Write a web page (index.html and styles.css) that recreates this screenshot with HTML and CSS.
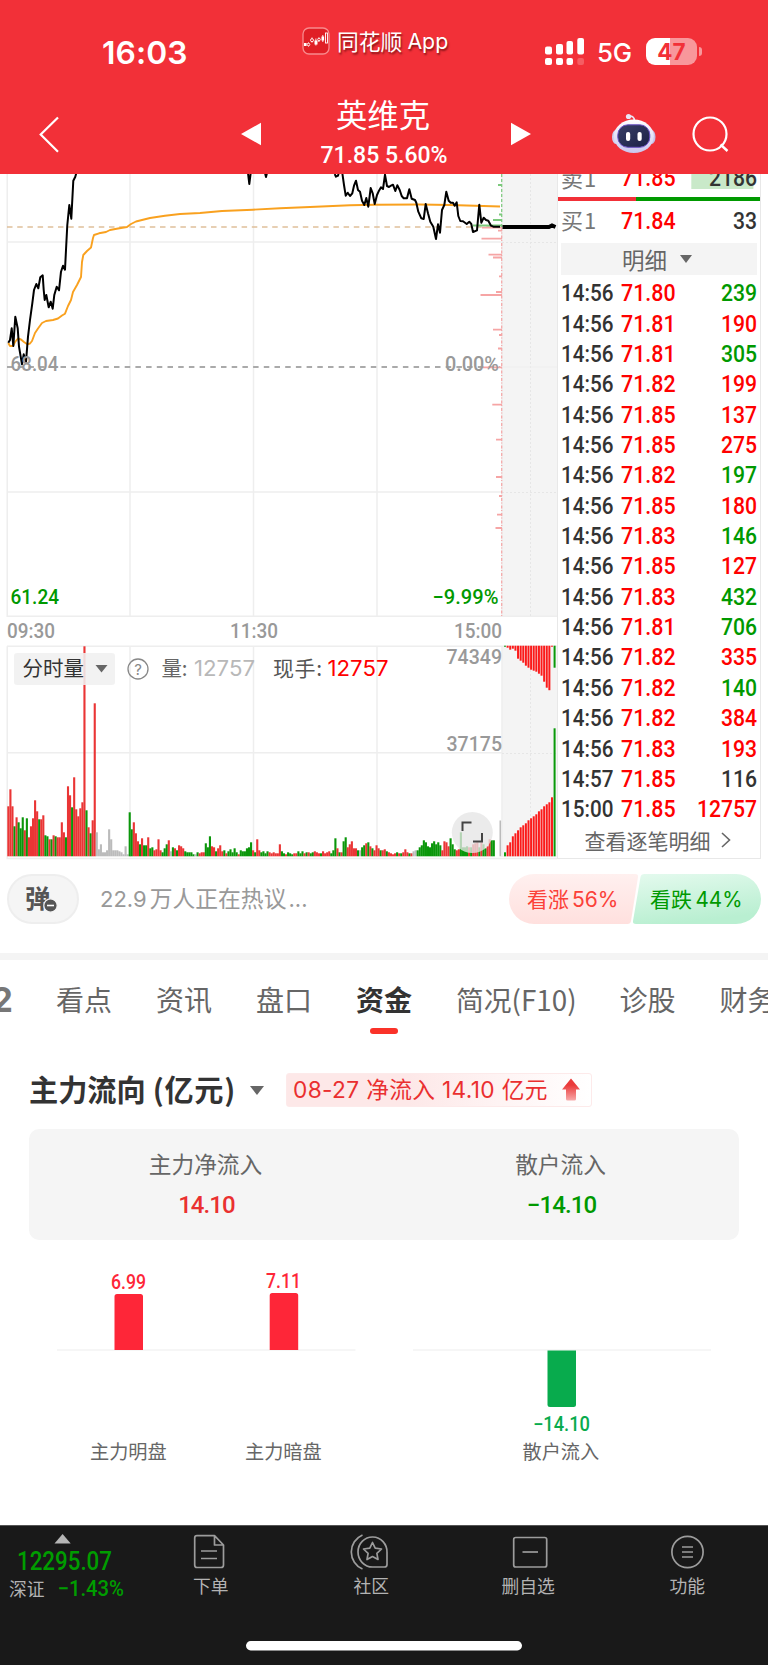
FILE: index.html
```html
<!DOCTYPE html>
<html lang="zh-CN">
<head>
<meta charset="utf-8">
<title>英维克 71.85</title>
<link rel="stylesheet" href="styles.css">
</head>
<body>
<div class="app">
  <header class="top">
    <div class="status">
      <div class="clock">16:03</div>
      <div class="brand">
        <svg class="brand-icon" viewBox="0 0 28 28"><rect x="1" y="1" width="26" height="26" rx="6" fill="#e01f26" stroke="#f88a8d" stroke-width="1.3"/><g fill="#fff"><rect x="2" y="16" width="2.6" height="3"/><rect x="12.5" y="13.5" width="3" height="4"/><rect x="19.5" y="9.500" width="2.600" height="4"/></g><g fill="none" stroke="#fff" stroke-width=".9"><path d="M6.500 15.500v4M10 10.500v5M16.900 10.500v4.500M13.900 11.500v7M20.800 8v7"/><circle cx="6.500" cy="17.500" r="1.300" fill="#e01f26"/><circle cx="10" cy="13.200" r="1.500" fill="#e01f26"/><circle cx="17" cy="12.500" r="1.300" fill="#e01f26"/><rect x="23.500" y="6" width="2" height="10"/></g></svg>
        <span class="brand-cn">同花顺</span><span class="brand-en">App</span>
      </div>
      <div class="signals">
        <svg width="40" height="28" viewBox="0 0 40 28" fill="#fff"><rect x="0" y="8.500" width="7" height="8" rx="2"/><rect x="11" y="6" width="7" height="10.500" rx="2"/><rect x="21.500" y="3" width="6.500" height="13.500" rx="2"/><rect x="32.300" y="0" width="6.700" height="16.500" rx="2"/><rect x="0" y="20" width="7" height="7" rx="2"/><rect x="11" y="20" width="7" height="7" rx="2"/><rect x="21.500" y="20" width="6.500" height="7" rx="2"/><rect x="32.300" y="20" width="6.700" height="7" rx="2" opacity=".22"/></svg>
        <span class="net">5G</span>
        <span class="battery">47</span><i class="nub"></i>
      </div>
    </div>
    <nav class="nav">
      <svg viewBox="0 90 768 84" width="768" height="84">
        <path d="M58 117.500L40.700 134.500L58 151.700" fill="none" stroke="#fff" stroke-width="2.200"/>
        <path d="M241 134L261 122.700V145.300ZM531 134L511 122.700V145.300Z" fill="#fff"/>
        <text class="cjk" x="336" y="127" font-size="31.300" textLength="94" fill="#fff">英维克</text>
        <text class="num" x="320.500" y="163" font-size="24.500" textLength="127" lengthAdjust="spacingAndGlyphs" fill="#fff">71.85 5.60%</text>
        <defs>
          <linearGradient id="head" x1="0" y1="0" x2="0" y2="1"><stop offset="0" stop-color="#fff"/><stop offset="1" stop-color="#c9c6ee"/></linearGradient>
          <linearGradient id="visor" x1="0" y1="0" x2="1" y2="1"><stop offset="0" stop-color="#3a3f66"/><stop offset="1" stop-color="#1a2046"/></linearGradient>
        </defs>
        <path d="M628 116.500C632 115.500 634.500 117 634.500 121" fill="none" stroke="#e9e7f6" stroke-width="1.800"/>
        <circle cx="628.500" cy="116.500" r="2.600" fill="#e9e7f6"/>
        <ellipse cx="616" cy="137" rx="4" ry="7" fill="#cfd0f0"/><ellipse cx="651.500" cy="137" rx="4" ry="7" fill="#c5c2ea"/>
        <ellipse cx="633.800" cy="136.300" rx="20" ry="16.800" fill="url(#head)"/>
        <rect x="617.800" y="124.800" width="32" height="22.500" rx="10" fill="url(#visor)" stroke="#6a4fc4" stroke-width="1"/>
        <rect x="626" y="132" width="4.200" height="9" rx="2" fill="#fff"/><rect x="637.500" y="132" width="4.200" height="9" rx="2" fill="#fff"/>
        <circle cx="710" cy="134" r="16.500" fill="none" stroke="#fff" stroke-width="2.200"/>
        <path d="M720.500 144.500L727.500 151" stroke="#fff" stroke-width="2.400"/>
      </svg>
    </nav>
  </header>

  <section class="market">
    <svg class="chart" viewBox="0 174 557 688" width="557" height="688">
      <rect x="502" y="174" width="55" height="442" fill="#f4f4f4"/>
      <rect x="502" y="646" width="55" height="211" fill="#f4f4f4"/>
      <g stroke="#eee" stroke-width="1.500" fill="none">
        <path d="M7.200 174V616.200H557M7.200 646.200V858.500H557M7 646.200H557M130 174V616M253.500 174V616M377 174V616M502 174V616M7 242H502M7 492H502"/>
        <path d="M130 646V857M253.500 646V857M377 646V857M502 646V857M7 752.700H502"/>
        <path stroke="#e6e6e6" stroke-width="1" stroke-dasharray="2 2" d="M530.500 174V616M530.500 646V857M502 242.500H557M502 492.500H557M502 753.500H557"/>
        <path d="M502 367H557" stroke-width="1"/>
      </g>
      <path d="M7 227H500" stroke="#dfc09a" stroke-width="1.300" stroke-dasharray="5.500 4.700"/>
      <path d="M7 367H500" stroke="#aaa" stroke-width="1.800" stroke-dasharray="5.500 5.200"/>
      <g fill="none" stroke="#f6a5a5" stroke-width="1.800">
        <path d="M482 227.700H502M498 230.700H502M481.500 238.700H502M488.500 254.700H502M493 257.500H502M499 276.300H502M496 292H502M480.500 295H502M493 329.700H502M499 335H502M498 348.500H502M483 367.300H502M492.300 404.700H502M496 439.700H502M496 477H502M499 496H502M497 514.700H502M495.500 528H502"/>
        <path d="M501.700 228V616" stroke-width="1.200" stroke-dasharray="3 1.500 1 2"/>
        <path stroke="#7cc97c" d="M498 185H502M493 220H502M473 225.500H502M499 214.500H502"/>
        <path stroke="#7cc97c" d="M501.700 174V227" stroke-width="1.200" stroke-dasharray="3 2"/>
      </g>
      <path fill="none" stroke="#f9a11f" stroke-width="1.900" stroke-linejoin="round" d="M8.300 343L10 346L13 346L15 342L18 338.500L21 339.500L24 342L27.300 344.300L30 343.500L32 341L35 333L38 328.500L42 323L46 321L53 320L58 318.500L62 315.500L65 313.700L68 306L71 300L73 292L77 285L81 277L82 262L83.300 255L87 251L91 247.500L93 238L94 235L99 233.300L106 232L110 230L118 228.500L127 227L131 224L136 221.500L150 218L165 215.700L180 214L200 213L222 211L253 209.700L280 208.300L310 207L350 205.300L375 204.700L420 204.500L450 205L500 206.500"/>
      <path fill="none" stroke="#000" stroke-width="2" stroke-linejoin="round" d="M8.300 342.700L10 340L11.700 328.300L13.300 346L15.300 316.700L17.700 328.300L19 346.700L20.700 356.700L22 364.300L23.700 354.300L26 361.700L28 336.700L30 320L32.300 303.300L34 290L36.300 284L38.300 288.300L40.300 277.300L42.700 275.300L43.700 290L44.700 300L46.300 295L48.700 307.300L50.700 301.700L52.700 308.700L54.300 295L56.700 286.700L59 290.300L61 271.700L63 265.700L65 269.700L66 250L67.300 225L69.300 205L71.300 218.700L73.300 180.700L75.300 176.700L76.300 173M248 173L249.300 184L250.700 173M265 173L266 177L267 173M334.700 174L336 176.700L338 175.700L338.700 173M342.300 173L344 185L345.700 195.700L347.700 192.700L350 196L352.300 193.300L354 185.700L356 180.700L358 190L360 191.700L362 200.700L364.300 205L366.300 198L368.300 206.700L370.700 188L372.700 193.300L374.700 204L377 195L379 190.700L381 187.300L383 189L385 174.700L387 186L389 187L391 185.700L393 184.700L395.300 191L397.300 185.300L399.700 190L401.700 196L403.700 198.300L407 198.300L409.300 189.300L411.700 198.700L415 200L416.300 202.700L418.300 211.700L421.300 218.300L423.700 219L425.700 204L428 213.300L430.300 221.700L433.300 226.700L436 239L438 224.300L440 232.700L442 210L444.300 205L446.300 191.700L448.700 200.700L450.700 202.700L453 202.700L454.700 205.700L456.700 202.300L458.300 216L460.300 221L463 221.300L466.700 224L469.300 221.700L471.300 224L473 232L477 230.300L479.300 204.700L481.300 222.700L483.700 217.700L486 220L488.300 220.700L491 225.700L493.300 226.700L500 226.700"/>
      <path d="M502.500 227H549L552 225.500L555.500 227" fill="none" stroke="#000" stroke-width="4"/>
      <g class="num" font-size="20.500" fill="#999">
        <text x="10.500" y="370.500" textLength="48" lengthAdjust="spacingAndGlyphs">68.04</text>
        <text x="445" y="370.500" textLength="54" lengthAdjust="spacingAndGlyphs">0.00%</text>
        <text x="10.500" y="604" textLength="48.500" lengthAdjust="spacingAndGlyphs" fill="#090">61.24</text>
        <text x="432.500" y="604" textLength="66" lengthAdjust="spacingAndGlyphs" fill="#090">−9.99%</text>
        <text x="7" y="637.700" textLength="48" lengthAdjust="spacingAndGlyphs">09:30</text>
        <text x="230" y="637.700" textLength="48" lengthAdjust="spacingAndGlyphs">11:30</text>
        <text x="454" y="637.700" textLength="48" lengthAdjust="spacingAndGlyphs">15:00</text>
        <text x="446.500" y="663.700" textLength="55.500" lengthAdjust="spacingAndGlyphs">74349</text>
        <text x="446.500" y="751" textLength="55.500" lengthAdjust="spacingAndGlyphs">37175</text>
      </g>
      <g id="volume"></g>
      <rect x="14" y="653" width="101" height="32" rx="3" fill="#f0f0f0" opacity=".88"/>
      <text class="cjk" x="22.500" y="676" font-size="20.500" textLength="61.500" fill="#333">分时量</text>
      <path d="M95.500 665H107.500L101.500 672.500Z" fill="#666"/>
      <circle cx="138" cy="669" r="10" fill="none" stroke="#888" stroke-width="1.300"/>
      <text class="ui" x="138" y="674.500" font-size="15" text-anchor="middle" fill="#888">?</text>
      <text class="cjk" x="161.500" y="676" font-size="20.500" textLength="26" fill="#666">量:</text>
      <text class="ui" x="194" y="676" font-size="21" textLength="61" lengthAdjust="spacingAndGlyphs" fill="#b8b8b8">12757</text>
      <text class="cjk" x="273" y="676" font-size="21" textLength="49" fill="#555">现手:</text>
      <text class="ui" x="327.500" y="676" font-size="21" textLength="61" lengthAdjust="spacingAndGlyphs" fill="#f00">12757</text>
      <circle cx="472.300" cy="832.500" r="20.500" fill="#e6e6e6" opacity=".78"/>
      <path d="M462.500 831V822.500H471.500M482 833V841.500H473" fill="none" stroke="#444" stroke-width="2"/>
    </svg>
    <aside class="book">
      <div class="quote first"><span class="lab">卖1</span><b class="p">71.85</b><b class="v tint">2186</b></div>
      <div class="ratio"><i></i></div>
      <div class="quote second"><span class="lab">买1</span><b class="p">71.84</b><b class="v">33</b></div>
      <div class="detail">明细<i class="caret"></i></div>
      <ul class="ticks" id="ticks"></ul>
      <div class="more">查看逐笔明细<svg width="10" height="16" viewBox="0 0 10 16"><path d="M1 1L8.500 8L1 15" fill="none" stroke="#666" stroke-width="1.600"/></svg></div>
    </aside>
  </section>

  <section class="talk">
    <div class="danmu">弹<svg class="minus" width="15" height="15" viewBox="0 0 15 15"><circle cx="7.500" cy="7.500" r="6.700" fill="#555" stroke="#f5f5f5" stroke-width="1.200"/><path d="M4 7.500H11" stroke="#fff" stroke-width="1.600"/></svg></div>
    <div class="hot">22.9<span>万人正在热议</span>...</div>
    <svg class="vote" width="253" height="50" viewBox="508 874 253 50">
      <defs><linearGradient id="up" x1="0" y1="0" x2="0" y2="1"><stop offset="0" stop-color="#fff0ef"/><stop offset="1" stop-color="#ffe0de"/></linearGradient>
      <linearGradient id="down" x1="0" y1="0" x2=".3" y2="1"><stop offset="0" stop-color="#e4faee"/><stop offset="1" stop-color="#b9efd1"/></linearGradient></defs>
      <path d="M534 874H635Q638.500 874 638 877L631 921Q630.500 924 627.500 924H534A25 25 0 0 1 534 874Z" fill="url(#up)"/>
      <path d="M644.500 874H736A25 25 0 0 1 736 924H636Q632.500 924 633 921L640.500 877Q641 874 644.500 874Z" fill="url(#down)"/>
      <g class="cjk" font-size="21"><text x="527" y="906.500" textLength="42" fill="#fb4038">看涨</text><text x="650" y="906.500" textLength="42" fill="#090">看跌</text></g>
      <g class="ui" font-size="21"><text x="572" y="906.500" textLength="46.500" lengthAdjust="spacingAndGlyphs" fill="#fb4038">56%</text><text x="695.500" y="906.500" textLength="47" lengthAdjust="spacingAndGlyphs" fill="#090">44%</text></g>
    </svg>
  </section>

  <nav class="tabs">
    <span class="cut">2</span><span>看点</span><span>资讯</span><span>盘口</span><span class="on">资金</span><span class="wide">简况(F10)</span><span>诊股</span><span>财务</span>
  </nav>

  <main class="flow">
    <div class="flow-head">
      <h2>主力流向<span>(亿元)</span></h2><i class="caret"></i>
      <div class="tag"><span>08-27 净流入 14.10 亿元</span><svg width="20" height="24" viewBox="0 0 20 24"><defs><linearGradient id="arr" x1="0" y1="0" x2="0" y2="1"><stop offset=".3" stop-color="#ea3a3a"/><stop offset="1" stop-color="#f8aaaa"/></linearGradient></defs><path d="M10 .5L19 11.500H15V21Q15 22.500 13.500 22.500H6.500Q5 22.500 5 21V11.500H1Z" fill="url(#arr)"/></svg></div>
    </div>
    <div class="card">
      <div><p>主力净流入</p><b class="r">14.10</b></div>
      <div><p>散户流入</p><b class="g">−14.10</b></div>
    </div>
    <svg class="bars" viewBox="0 1260 768 220" width="768" height="220">
      <path d="M57 1350H355.500M413 1350H711" stroke="#eee" stroke-width="1.200"/>
      <path d="M114.500 1350V1296.500Q114.500 1294 117 1294H140.500Q143 1294 143 1296.500V1350ZM269.700 1350V1295.500Q269.700 1293 272.200 1293H295.700Q298.200 1293 298.200 1295.500V1350Z" fill="#fe2638"/>
      <path d="M547.500 1350.500V1404.500Q547.500 1407 550 1407H573.500Q576 1407 576 1404.500V1350.500Z" fill="#08ab4d"/>
      <g class="num" font-size="19.500" fill="#fe2638"><text x="111" y="1288.800" textLength="35" lengthAdjust="spacingAndGlyphs">6.99</text><text x="266" y="1288" textLength="35" lengthAdjust="spacingAndGlyphs">7.11</text><text x="533" y="1430.800" textLength="57" lengthAdjust="spacingAndGlyphs" fill="#08ab4d">−14.10</text></g>
      <g class="cjk" font-size="19.200" fill="#666"><text x="90" y="1459">主力明盘</text><text x="245" y="1459">主力暗盘</text><text x="522.500" y="1459">散户流入</text></g>
    </svg>
  </main>

  <footer class="dock">
    <svg viewBox="0 1525 768 140" width="768" height="140">
      <path d="M0 1525.500H768" stroke="#555"/>
      <path d="M54.500 1543.500L62.600 1534L70.700 1543.500Z" fill="#b5b5b5"/>
      <g class="num" fill="#009d00"><text x="17" y="1569.500" font-size="25" textLength="95" lengthAdjust="spacingAndGlyphs">12295.07</text><text x="57.500" y="1596" font-size="21.500" textLength="66.500" lengthAdjust="spacingAndGlyphs">−1.43%</text></g>
      <g class="cjk" font-size="17.800" fill="#b3b3b3"><text x="9" y="1596">深证</text><text x="193" y="1592.500">下单</text><text x="353.500" y="1592.500">社区</text><text x="501.500" y="1592.500">删自选</text><text x="669.500" y="1592.500">功能</text></g>
      <g fill="none" stroke="#9c9c9c" stroke-width="1.700" stroke-linejoin="round">
        <path d="M197 1535.700H214.500L223.500 1545V1565Q223.500 1567.500 221 1567.500H197Q194.700 1567.500 194.700 1565V1538Q194.700 1535.700 197 1535.700ZM214.500 1535.700V1545H223.500M201 1551H217M201 1558.500H217"/>
        <path d="M387 1552.500A14.500 15 0 1 0 372.500 1567H384.500Q387 1567 387 1564.500ZM362.500 1535A18.500 18.500 0 0 0 362.500 1569"/>
        <path d="M372.500 1542.500L375.200 1548.200L381.500 1549L376.900 1553.300L378 1559.500L372.500 1556.500L367 1559.500L368.100 1553.300L363.500 1549L369.800 1548.200Z"/>
        <rect x="513.700" y="1537.500" width="33" height="29.500" rx="2"/><path d="M522.500 1552H538"/>
        <circle cx="687.500" cy="1552" r="15.600"/><path d="M682 1547H693M682 1552H693M682 1557H693"/>
      </g>
      <rect x="246" y="1641" width="276" height="9.500" rx="4.700" fill="#fff"/>
    </svg>
  </footer>
</div>
<script src="app.js"></script>
</body>
</html>
```
FILE: styles.css
```css
* { box-sizing: border-box; }
body { margin: 0; background: #fff; font-family: Roboto, "Noto Sans CJK SC", sans-serif; }
svg { display: block; }
.app { width: 768px; height: 1665px; overflow: hidden; display: flex; flex-direction: column; background: #fff; }
.cjk { font-family: "Noto Sans CJK SC", sans-serif; }
.ui { font-family: Inter, sans-serif; }
.num { font-family: Roboto, sans-serif; font-weight: 500; }

.top { height: 174px; flex: none; background: #f23038; color: #fff; }
.status { height: 90px; display: flex; align-items: flex-start; padding-left: 102px; }
.clock { width: 200px; padding-top: 33px; font: 600 31.800px/40px Inter, sans-serif; letter-spacing: .1px; }
.brand { width: 243px; display: flex; align-items: center; padding-top: 25px; height: 56px; text-shadow: 1px 2px 2px rgba(60,0,0,.6); }
.brand-icon { width: 28px; height: 28px; margin-right: 7px; }
.brand-cn { font: 21.800px/30px "Noto Sans CJK SC", sans-serif; margin-right: 5px; }
.brand-en { font: 21.300px/30px Inter, sans-serif; }
.signals { display: flex; align-items: center; padding-top: 37px; height: 66px; }
.net { font: 500 25.800px/30px Inter, sans-serif; margin-left: 12px; width: 49px; letter-spacing: -.2px; padding-top: 2px; }
.battery { width: 51px; height: 27px; border-radius: 9px; background: linear-gradient(90deg, #fff 24px, #f8979b 24px); color: #f23038; font: 700 22.500px/27px Inter, sans-serif; text-align: center; }
.nub { width: 3px; height: 9px; margin-left: 2px; border-radius: 0 3px 3px 0; background: #f8979b; }
.nav { height: 84px; }

.market { height: 688px; flex: none; display: flex; }
.chart { flex: none; }
.book { width: 204px; height: 685px; border: solid #e8e8e8; border-width: 0 1px 1.500px 1px; overflow: hidden; }
.quote { display: flex; align-items: center; height: 43px; padding: 0 3px; }
.quote.first { height: 23px; align-items: flex-end; }
.quote.first > * { line-height: 31px; height: 31px; margin-bottom: 3px; }
.quote.first .lab { line-height: 28px; }
.lab { width: 60px; flex: none; font: 22px/30px "Noto Sans CJK SC", sans-serif; color: #777; letter-spacing: 1px; }
.p, .v { font: 500 23.500px/30px Roboto, sans-serif; }
.p { width: 60px; flex: none; color: #f00; transform: scaleX(.91); transform-origin: left; }
.v { flex: 1; text-align: right; color: #333; transform: scaleX(.9); transform-origin: right; }
.tint { background: linear-gradient(#c9e9c9, #c9e9c9) no-repeat 3px 0 / calc(100% - 7px) 26px; }
.ratio { height: 4px; background: #090; }
.ratio i { display: block; width: 78px; height: 4px; background: #f23038; }
.quote.second { height: 39px; padding-top: 1px; }
.second .lab { line-height: 28px; height: 32px; }
.detail { height: 32px; margin: 3px 3px 3px 3px; padding-left: 61px; background: #f4f4f4; color: #666; display: flex; align-items: center; font: 22.500px/30px "Noto Sans CJK SC", sans-serif; }
.detail { line-height: 28px; padding-bottom: 1px; }
.caret { border: solid transparent; border-width: 8px 6px 0; border-top-color: #666; margin-left: 13px; }
.ticks { list-style: none; margin: 0; padding: 0 3px; }
.ticks li { height: 30.360px; display: flex; align-items: center; }
.ticks .t { width: 60px; flex: none; font: 500 23.500px/30px Roboto, sans-serif; color: #333; transform: scaleX(.88); transform-origin: left; }
.ticks .r, .r { color: #f00; }
.ticks .g { color: #090; }
.more { display: flex; align-items: center; justify-content: center; gap: 10px; height: 32px; padding-right: 3px; color: #666; font: 21px/32px "Noto Sans CJK SC", sans-serif; }

.talk { height: 98px; flex: none; display: flex; padding: 12px 7px 0; border-bottom: 7px solid #f4f4f4; }
.danmu { position: relative; width: 72px; height: 50px; border: 2px solid #eee; border-radius: 25px; background: #f5f5f5; color: #555; font: 700 25.500px/41px "Noto Sans CJK SC", sans-serif; padding-left: 16px; }
.minus { position: absolute; left: 34px; top: 22px; }
.hot { flex: 1; padding-left: 21px; color: #999; font: 22px/50px Inter, sans-serif; white-space: nowrap; }
.hot span { margin: 0 2px 0 3px; font: 22.800px/48px "Noto Sans CJK SC", sans-serif; letter-spacing: 0; }

.tabs { height: 100px; flex: none; display: flex; gap: 44px; overflow: hidden; font: 28px/78px "Noto Sans CJK SC", sans-serif; color: #666; }
.tabs span { width: 56px; flex: none; white-space: nowrap; }
.tabs .cut { width: 26px; margin: 0 -1px 0 -13px; font: 700 34px/80px Inter, sans-serif; color: #777; text-align: right; }
.tabs .wide { width: 119.500px; font-size: 27.800px; }
.tabs .on { color: #333; font-weight: 700; }
.tabs .on::after { content: ""; display: block; width: 28px; height: 6px; margin: -10px auto 0; border-radius: 3px; background: #fa3229; }

.flow { flex: none; height: 465px; }
.flow-head { height: 69px; padding: 13px 0 0 29px; display: flex; align-items: flex-start; }
h2 { margin: 0; width: 207px; white-space: nowrap; color: #333; font: 700 29.200px/31px "Noto Sans CJK SC", sans-serif; }
h2 span { margin-left: 7px; letter-spacing: .7px; }
.flow-head .caret { margin: 13px 22px 0 14px; border-width: 9px 7.500px 0; }
.tag { width: 306px; height: 34px; display: flex; align-items: center; padding-left: 6px; border: 1px solid #fdeaea; border-radius: 3px; background: linear-gradient(90deg, #fde8e8 40%, #fff); color: #ea2f2f; font: 22.700px/30px Inter, "Noto Sans CJK SC", sans-serif; letter-spacing: .35px; }
.tag span { width: 268px; white-space: nowrap; }
.card { margin: 0 29px; height: 111px; border-radius: 10px; background: #f5f5f5; display: flex; text-align: center; }
.card div { flex: 1; padding-top: 19px; }
.card p { margin: 0 0 11px -2px; color: #666; font: 22.700px/32px "Noto Sans CJK SC", sans-serif; }
.card b { display: block; font: 500 24px/28px Roboto, sans-serif; letter-spacing: -.9px; }
.card .r { color: #ea3030; }
.card .g { color: #090; }
.bars { margin-top: 20px; }
.dock { flex: none; height: 140px; background: #191919; }
```
FILE: app.js
```js
const NS = 'http://www.w3.org/2000/svg';
const volume = document.getElementById('volume');
const palette = { r: '#ea3535', g: '#0a960a', x: '#bbb', R: '#fb1a1a', G: '#0a9a0a' };

function bar(x, y, w, h, key) {
  const el = document.createElementNS(NS, 'rect');
  el.setAttribute('x', x);
  el.setAttribute('y', y);
  el.setAttribute('width', w);
  el.setAttribute('height', h);
  el.setAttribute('fill', palette[key]);
  volume.appendChild(el);
}

// One entry per minute: colour key and bar height
const minutes = ('r50 r67 r50 g30 r39 g34 g28 g39 r26 g38 r19 r30 r38 r56 r45 g37 r37 r41 g21 g20 r17 g17 r21 g20 r19 r19 r34 r24 g19 r70 r61 g49 r79 r47 r40 r48 r54 r210 g46 r29 g23 r36 r153 x24 x7 x12 x4 x4 x6 x27 x17 x6 x6 x6 x5 x4 x2 x10 x2 ' +
  'g44 g27 r34 r23 r15 g12 r18 g11 g11 r19 g8 g9 r6 r7 r17 r6 g4 g8 g12 r16 x5 g9 r8 g6 r11 r10 r8 g5 g4 g4 g4 g2 x2 g4 r3 r4 r4 g13 g9 g20 r10 r9 g5 r8 r11 r5 g6 r3 g5 g7 g4 g8 g4 r2 g6 g5 g5 g8 g9 g14 r6 g4 r17 r6 g4 g5 g3 g5 r4 r3 r4 r3 r3 ' +
  'r12 g5 g3 r2 g4 g3 g2 r3 r3 g5 g3 g5 r3 g4 r4 g3 g4 r5 r4 r3 g3 r5 r3 r4 r5 g3 g6 g18 r8 g4 r4 g15 g19 r9 r12 r15 r8 r8 g6 x6 g9 g11 r13 g14 r10 g8 r6 r11 r8 g6 r6 r7 g5 r4 r3 r2 r3 g4 r3 g3 r4 r7 r4 g3 r3 x5 x6 g6 g9 g11 g16 g14 g10 g9 g13 g15 g12 g14 g11 r6 r15 r14 r10 g18 g12 g7 r6 r7 g24 g9 g9 g10 r9 g9 r12 r13 r14 g9 r14 g12 g8 r10 r17 g16 g16').split(' ');
const pitch = 487.5 / minutes.length;
minutes.forEach((m, i) => {
  const h = Number(m.slice(1));
  bar(7.3 + i * pitch, 856.3 - h, pitch + 0.05, h, m[0]);
});
bar(499.5, 820.5, 1.6, 35.8, 'x');

// Opening auction: matched volume rises from below, unmatched hangs from above
const matched = [4, 11, 14, 20, 23, 26, 29, 31, 33, 36, 38, 40, 42, 45, 47, 50, 52, 54, 59, 128];
const unmatched = [1, 2, 4, 3, 5, 13, 15, 17, 20, 22, 24, 25, 26, 28, 30, 36, 42, 44.5, 1, 22];
matched.forEach((h, i) => {
  bar(504 + i * 2.61, 856.3 - h, 2, h, i === 0 || i === 19 ? 'G' : 'R');
});
unmatched.forEach((h, i) => {
  bar(504 + i * 2.61, 645.7, 2, h, i === 0 || i === 19 ? 'G' : 'R');
});

const trades = [
  ['71.80', 239, 'g'], ['71.81', 190, 'r'], ['71.81', 305, 'g'], ['71.82', 199, 'r'],
  ['71.85', 137, 'r'], ['71.85', 275, 'r'], ['71.82', 197, 'g'], ['71.85', 180, 'r'],
  ['71.83', 146, 'g'], ['71.85', 127, 'r'], ['71.83', 432, 'g'], ['71.81', 706, 'g'],
  ['71.82', 335, 'r'], ['71.82', 140, 'g'], ['71.82', 384, 'r'], ['71.83', 193, 'r'],
  ['71.85', 116, ''], ['71.85', 12757, 'r']
];
document.getElementById('ticks').innerHTML = trades.map(([p, v, c], i) => {
  const t = i < 16 ? '14:56' : i === 16 ? '14:57' : '15:00';
  return `<li><span class="t">${t}</span><span class="p">${p}</span><span class="v ${c}">${v}</span></li>`;
}).join('');
```
